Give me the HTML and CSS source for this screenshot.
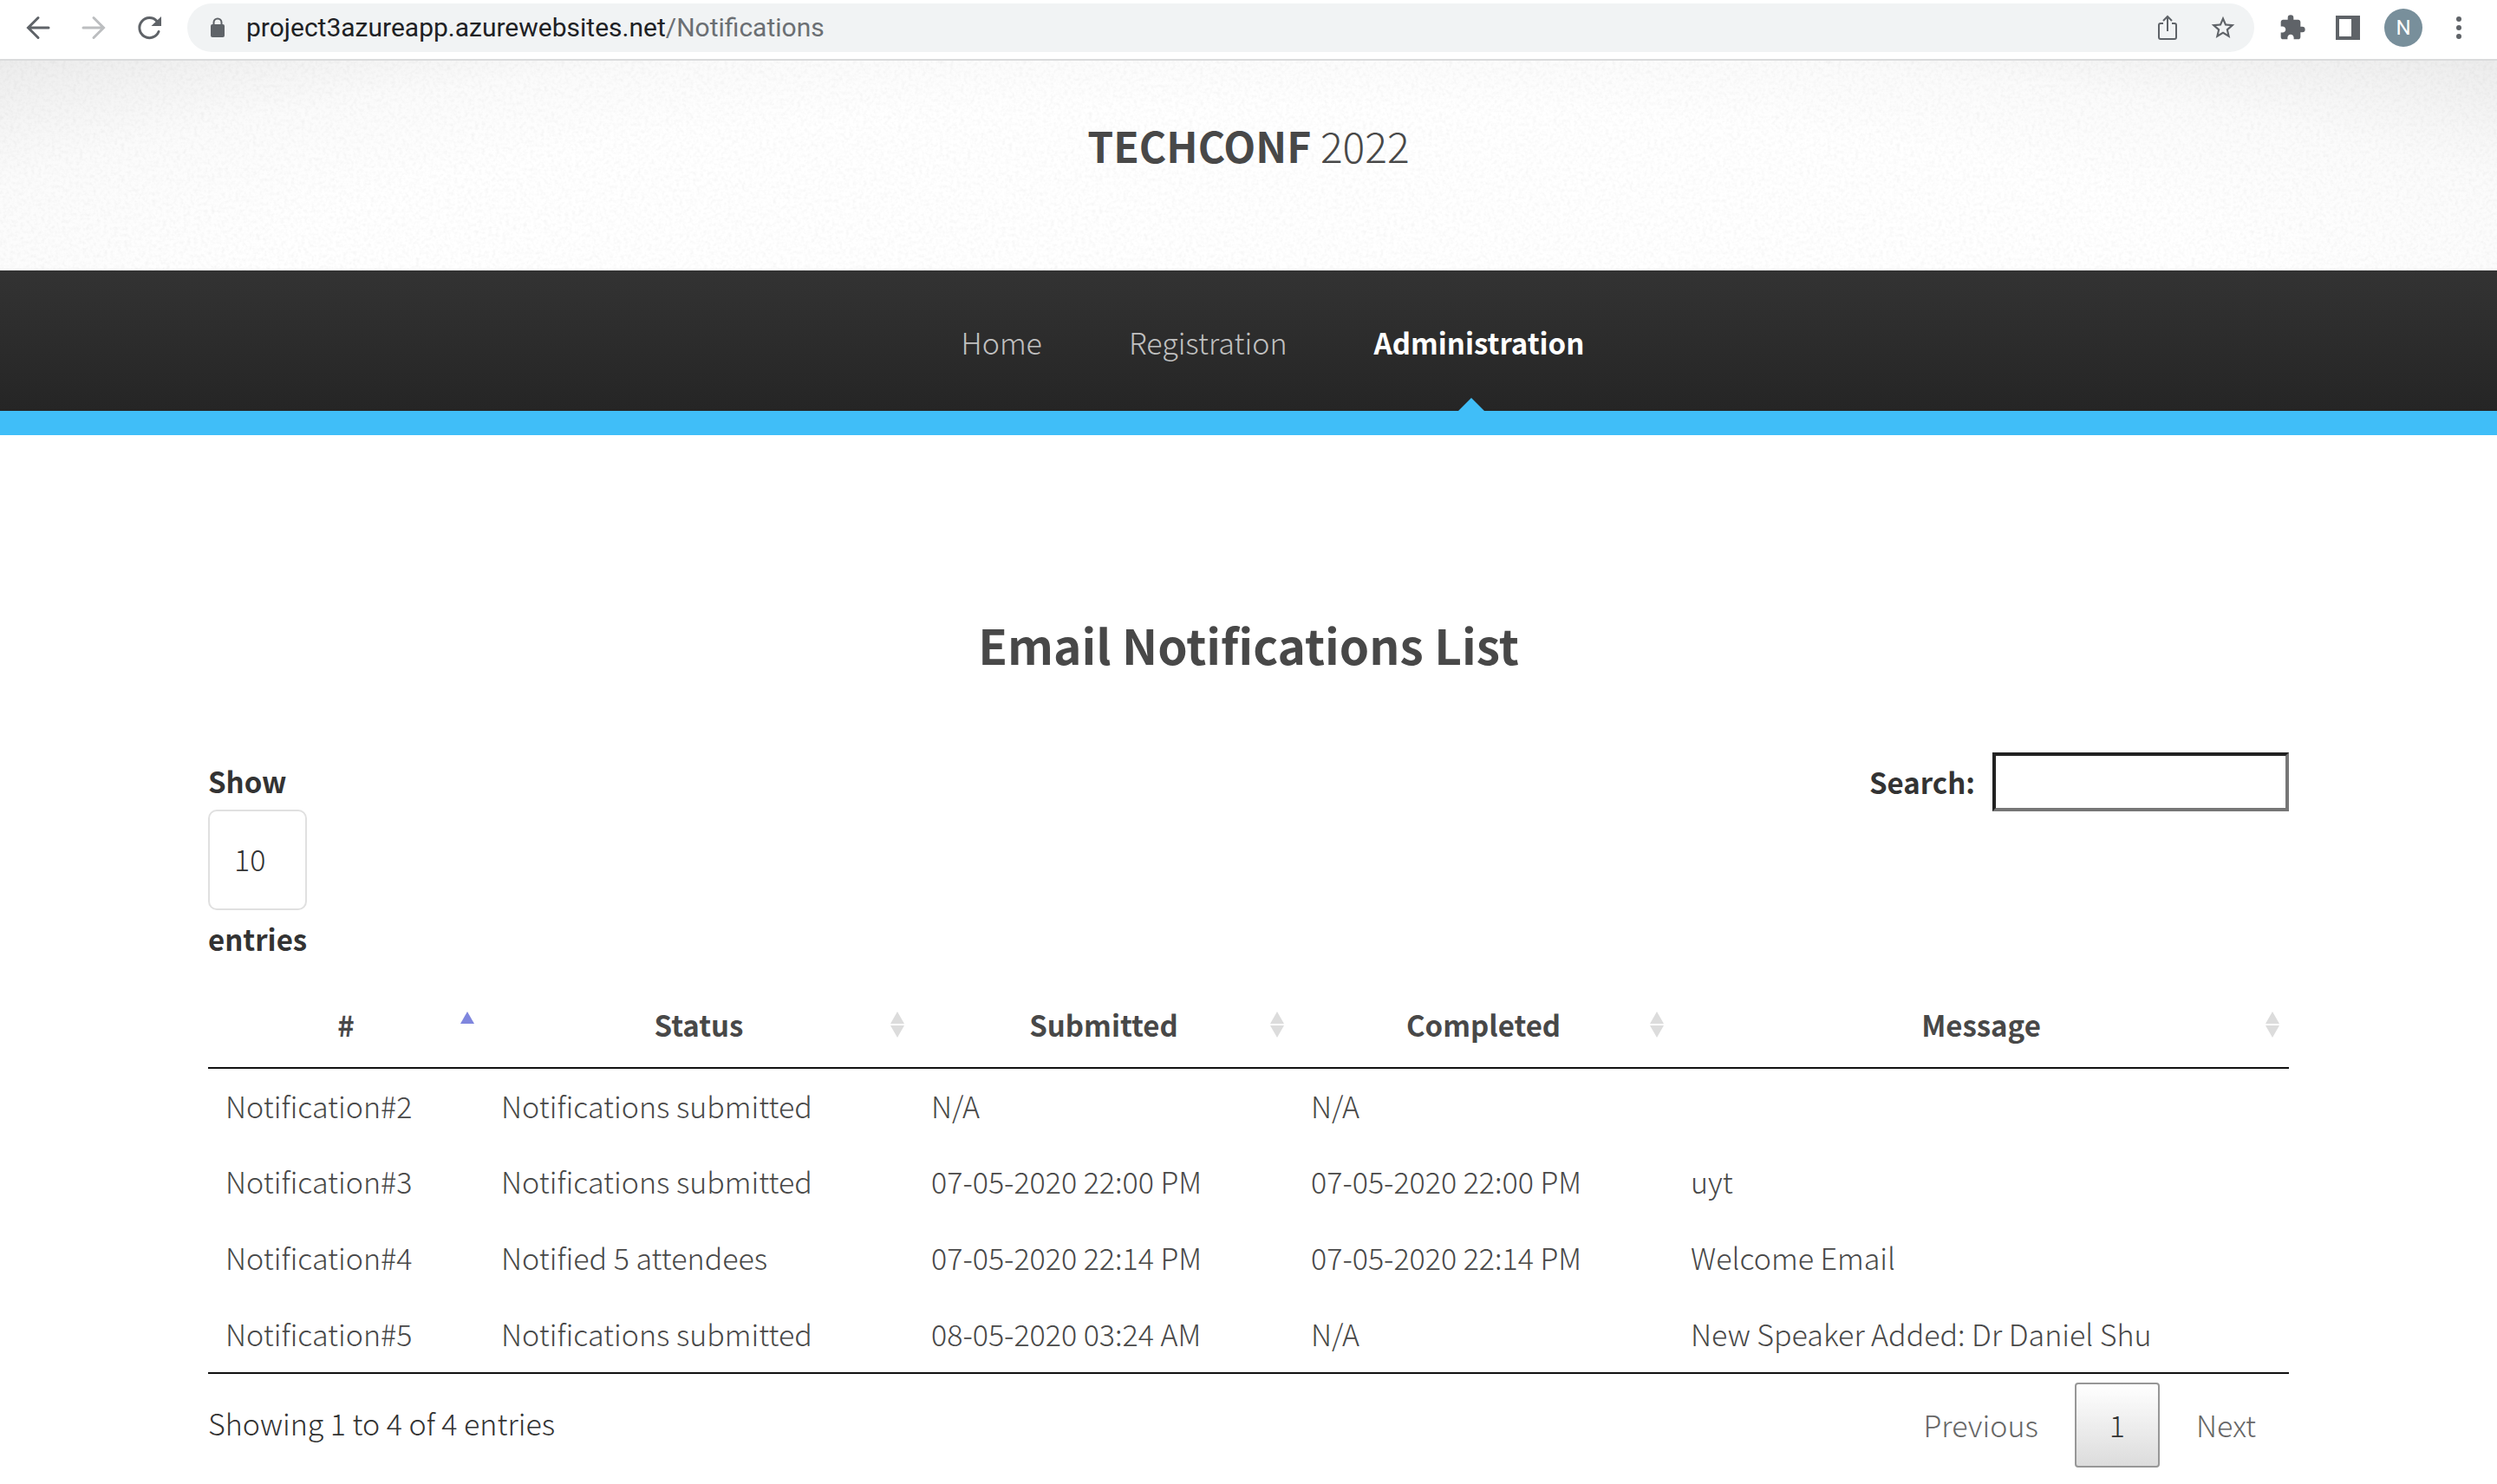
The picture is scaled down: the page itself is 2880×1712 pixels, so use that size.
FILE: index.html
```html
<!DOCTYPE html>
<html lang="en">
<head>
<meta charset="utf-8">
<title>TechConf 2022 - Notifications</title>
<link rel="stylesheet" href="styles.css">
</head>
<body>
<div class="toolbar">
  <button class="tool" aria-label="Back"><svg width="32" height="32" viewBox="0 0 32 32" fill="none" stroke="#5f6368" stroke-width="3" stroke-linecap="round"><path d="M28 16H5M16 4.500L4.500 16L16 27.500"/></svg></button>
  <button class="tool" aria-label="Forward"><svg width="32" height="32" viewBox="0 0 32 32" fill="none" stroke="#bcbec0" stroke-width="3" stroke-linecap="round"><path d="M4 16H27M16 4.500L27.500 16L16 27.500"/></svg></button>
  <button class="tool" aria-label="Reload"><svg width="32" height="32" viewBox="0 0 32 32"><path d="M25 8.500A11.500 11.500 0 1 0 27 20.500" fill="none" stroke="#5f6368" stroke-width="3" stroke-linecap="round"/><path d="M30 3V14H18.500Z" fill="#5f6368"/></svg></button>
  <div class="address">
    <svg width="18" height="24" viewBox="0 0 18 24"><path d="M4.500 10V6a4.500 4.500 0 0 1 9 0V10" fill="none" stroke="#5f6368" stroke-width="2"/><rect x="1" y="8" width="16" height="15" rx="2" fill="#5f6368"/></svg>
    <span class="url">project3azureapp.azurewebsites.net<span class="path">/Notifications</span></span>
    <button class="tool" aria-label="Share"><svg width="32" height="32" viewBox="0 0 32 32" fill="none" stroke="#5f6368" stroke-width="2"><path d="M11 11H8a2 2 0 0 0-2 2V27a2 2 0 0 0 2 2H24a2 2 0 0 0 2-2V13a2 2 0 0 0-2-2H21M16 20V4M11 8L16 3L21 8"/></svg></button>
    <button class="tool" aria-label="Bookmark"><svg width="32" height="32" viewBox="0 0 24 24" fill="#5f6368"><path d="M22 9.240l-7.190-.62L12 2 9.190 8.630 2 9.240l5.460 4.730L5.820 21 12 17.270 18.180 21l-1.630-7.030L22 9.240zM12 15.400l-3.760 2.270 1-4.280-3.320-2.880 4.380-.38L12 6.100l1.710 4.040 4.380.38-3.320 2.880 1 4.280L12 15.400z"/></svg></button>
  </div>
  <button class="tool" aria-label="Extensions"><svg width="32" height="32" viewBox="0 0 24 24"><path fill="#5f6368" d="M20.500 11H19V7c0-1.100-.9-2-2-2h-4V3.500a2.500 2.500 0 0 0-5 0V5H4c-1.100 0-1.990.9-1.990 2v3.800H3.500c1.490 0 2.700 1.210 2.700 2.700s-1.210 2.700-2.700 2.700H2V20c0 1.100.9 2 2 2h3.800v-1.500c0-1.490 1.210-2.700 2.700-2.700 1.490 0 2.700 1.210 2.700 2.700V22H17c1.100 0 2-.9 2-2v-4h1.500a2.500 2.500 0 0 0 0-5z"/></svg></button>
  <button class="tool" aria-label="Side panel"><svg width="32" height="32" viewBox="0 0 32 32"><path fill="#5f6368" fill-rule="evenodd" d="M2 2H30V30H2ZM6 6V26H20V6Z"/></svg></button>
  <button class="avatar" aria-label="Profile">N</button>
  <button class="tool" aria-label="Menu"><svg width="32" height="32" viewBox="0 0 32 32" fill="#5f6368"><circle cx="16" cy="6" r="3"/><circle cx="16" cy="16" r="3"/><circle cx="16" cy="26" r="3"/></svg></button>
</div>

<header class="banner">
  <svg class="grain" aria-hidden="true"><filter id="grain"><feTurbulence type="fractalNoise" baseFrequency=".25" numOctaves="2" seed="4"/><feColorMatrix values="0 0 0 0 0  0 0 0 0 0  0 0 0 0 0  .6 .6 0 0 -.5"/></filter><rect width="100%" height="100%" filter="url(#grain)"/></svg>
  <a class="logo" href="#"><strong>TECHCONF</strong> 2022</a>
</header>
<nav class="nav">
  <a href="#">Home</a>
  <a href="#">Registration</a>
  <a class="current" href="#" aria-current="page">Administration</a>
</nav>

<main class="content">
  <h1>Email Notifications List</h1>
  <div class="controls">
    <div class="length">
      <label for="length">Show</label>
      <select id="length"><option>10</option></select>
      <label for="length">entries</label>
    </div>
    <div class="filter">
      <label for="search">Search:</label>
      <input id="search" type="search">
    </div>
  </div>
  <table>
    <colgroup><col class="c-id"><col class="c-status"><col class="c-date"><col class="c-date"><col></colgroup>
    <thead>
      <tr>
        <th scope="col"><div class="head">#<svg class="sort" viewBox="0 0 20 32"><path fill="#7f86de" d="M10 1L18 15H2Z"/></svg></div></th>
        <th scope="col"><div class="head">Status<svg class="sort" viewBox="0 0 20 32"><path fill="#dcdcdc" d="M10 1L18 15H2ZM2 17H18L10 31Z"/></svg></div></th>
        <th scope="col"><div class="head">Submitted<svg class="sort" viewBox="0 0 20 32"><path fill="#dcdcdc" d="M10 1L18 15H2ZM2 17H18L10 31Z"/></svg></div></th>
        <th scope="col"><div class="head">Completed<svg class="sort" viewBox="0 0 20 32"><path fill="#dcdcdc" d="M10 1L18 15H2ZM2 17H18L10 31Z"/></svg></div></th>
        <th scope="col"><div class="head">Message<svg class="sort" viewBox="0 0 20 32"><path fill="#dcdcdc" d="M10 1L18 15H2ZM2 17H18L10 31Z"/></svg></div></th>
      </tr>
    </thead>
    <tbody>
      <tr><td>Notification#2</td><td>Notifications submitted</td><td>N/A</td><td>N/A</td><td></td></tr>
      <tr><td>Notification#3</td><td>Notifications submitted</td><td>07-05-2020 22:00 PM</td><td>07-05-2020 22:00 PM</td><td>uyt</td></tr>
      <tr><td>Notification#4</td><td>Notified 5 attendees</td><td>07-05-2020 22:14 PM</td><td>07-05-2020 22:14 PM</td><td>Welcome Email</td></tr>
      <tr><td>Notification#5</td><td>Notifications submitted</td><td>08-05-2020 03:24 AM</td><td>N/A</td><td>New Speaker Added: Dr Daniel Shu</td></tr>
    </tbody>
  </table>
  <div class="footer">
    <p>Showing 1 to 4 of 4 entries</p>
    <div class="pages">
      <button>Previous</button>
      <button class="active" aria-current="page">1</button>
      <button>Next</button>
    </div>
  </div>
</main>
</body>
</html>
```
FILE: styles.css
```css
* { box-sizing: border-box; }
body {
  margin: 0;
  background: #fff;
  color: #484848;
  font: 300 34px/66px "Noto Sans CJK SC", "Noto Sans", sans-serif;
}
a { color: inherit; text-decoration: none; }
button { border: 0; background: none; padding: 0; font: inherit; color: inherit; }

/* browser toolbar */
.toolbar {
  display: flex;
  align-items: center;
  gap: 32px;
  height: 70px;
  padding: 0 28px 4px;
  border-bottom: 2px solid #dadbdc;
  font-family: Roboto, sans-serif;
  font-weight: 400;
}
.tool { display: flex; flex: none; }
.address {
  display: flex;
  flex: 1;
  align-items: center;
  gap: 24px;
  height: 56px;
  margin-left: -4px;
  margin-right: -4px;
  padding: 0 20px 0 26px;
  border-radius: 28px;
  background: #f1f3f4;
}
.address .tool + .tool { margin-left: 8px; }
.url { flex: 1; font-size: 30px; line-height: 56px; color: #202124; }
.path { color: #6b6f73; }
.avatar {
  flex: none;
  width: 44px;
  height: 44px;
  margin: 0 -6px;
  border-radius: 50%;
  background: #788f9b;
  color: #fff;
  font-size: 24px;
  line-height: 44px;
}

/* site header */
.banner {
  position: relative;
  height: 242px;
  padding-top: 64px;
  text-align: center;
  background: radial-gradient(ellipse 60% 120% at 50% 100%, #fff 65%, #fbfbfb 90%, #ececec 118%);
}
.grain { position: absolute; inset: 0; width: 100%; height: 100%; opacity: .08; }
.logo { position: relative; font-size: 48px; }
.logo strong { font-weight: 700; }
.nav {
  display: flex;
  justify-content: center;
  gap: 100px;
  height: 190px;
  padding: 50px 0 0 56px;
  border-bottom: 28px solid #40bef8;
  background: linear-gradient(#333, #252525);
  color: #c0c0c0;
}
.current { position: relative; height: 112px; color: #fff; font-size: 33px; font-weight: 700; }
.current::after {
  content: "";
  position: absolute;
  bottom: 0;
  left: calc(50% - 24px);
  border: 15px solid transparent;
  border-top: 0;
  border-bottom-color: #40bef8;
}

/* notifications */
.content { padding: 196px 240px 0; }
h1 { margin: 0 0 80px; text-align: center; font-size: 55px; line-height: 90px; }
.controls { display: flex; justify-content: space-between; align-items: flex-start; color: #333; }
label { font-size: 33px; font-weight: 700; }
.length { display: flex; flex-direction: column; align-items: flex-start; }
select {
  appearance: none;
  width: 114px;
  height: 116px;
  padding: 0 28px 2px;
  border: 2px solid #e0e0e0;
  border-radius: 10px;
  background: #fff;
  color: inherit;
  font: inherit;
}
.filter { display: flex; align-items: center; gap: 20px; }
input { width: 342px; height: 68px; border: 4px inset #767676; background: #fff; font: inherit; }
table { width: 100%; table-layout: fixed; border-collapse: collapse; border-bottom: 2px solid #111; }
.c-id { width: 318px; }
.c-status { width: 496px; }
.c-date { width: 438px; }
th { height: 116px; padding: 16px 0 0; border-bottom: 2px solid #111; font-size: 33px; font-weight: 700; }
.head { position: relative; }
.sort { position: absolute; right: 9px; top: 17px; width: 20px; height: 32px; }
td { height: 88px; padding: 0 20px 2px; }
.footer { display: flex; justify-content: space-between; padding-top: 10px; color: #333; }
p { margin: 14px 0; }
.pages { display: flex; gap: 4px; }
.pages button { height: 98px; padding: 0 36px; border: 2px solid transparent; border-radius: 4px; color: #666; }
.pages .active { padding: 0 38px; border-color: #979797; background: linear-gradient(#fff, #dcdcdc); color: #333; }
```
